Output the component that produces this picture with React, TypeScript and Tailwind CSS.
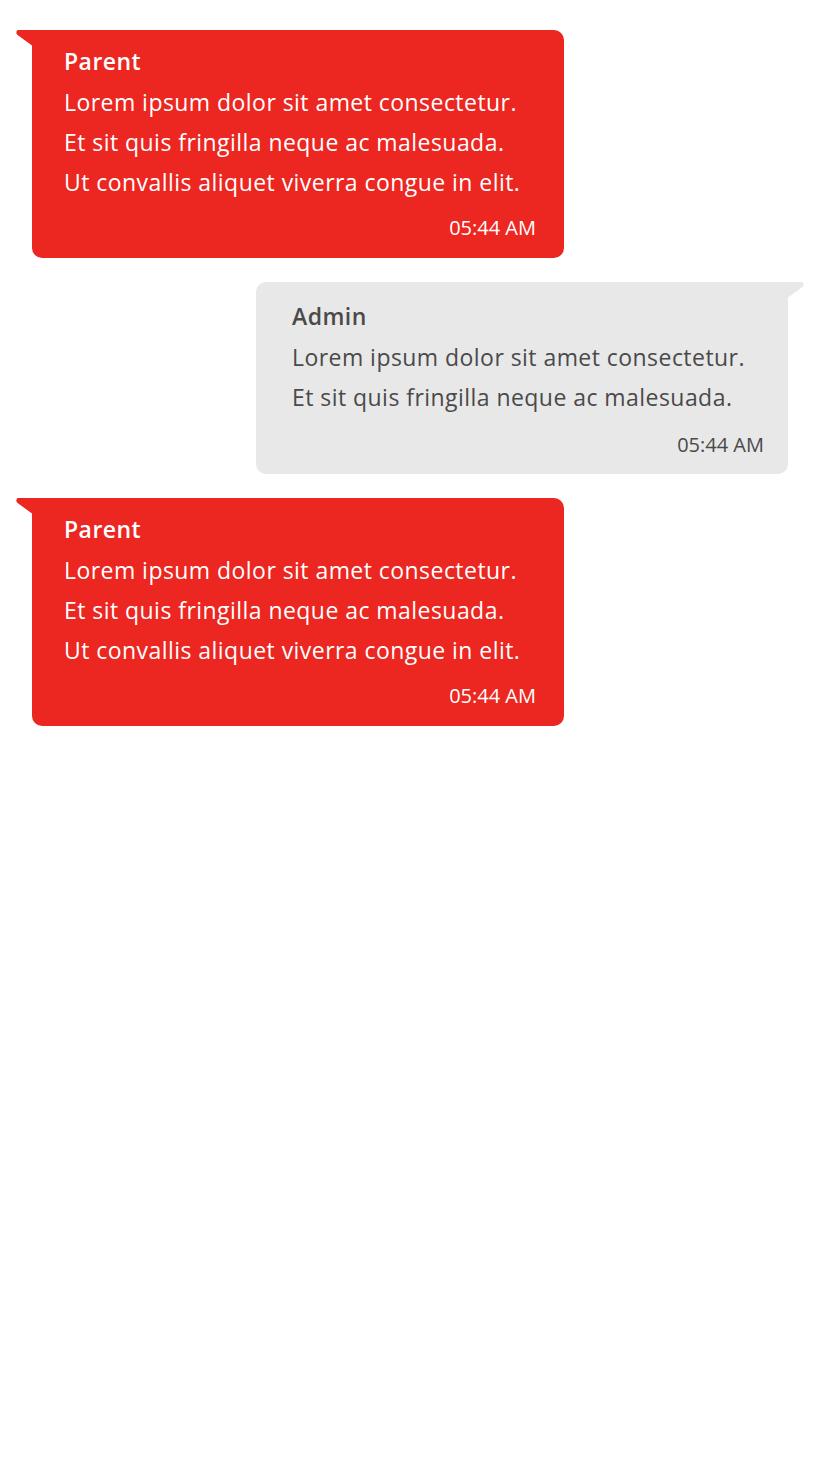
import React from 'react';

type Message = {
  id: number;
  author: string;
  lines: string[];
  time: string;
  mine: boolean;
};

const MESSAGES: Message[] = [
  {
    id: 1,
    author: 'Parent',
    lines: [
      'Lorem ipsum dolor sit amet consectetur.',
      'Et sit quis fringilla neque ac malesuada.',
      'Ut convallis aliquet viverra congue in elit.',
    ],
    time: '05:44 AM',
    mine: false,
  },
  {
    id: 2,
    author: 'Admin',
    lines: [
      'Lorem ipsum dolor sit amet consectetur.',
      'Et sit quis fringilla neque ac malesuada.',
    ],
    time: '05:44 AM',
    mine: true,
  },
  {
    id: 3,
    author: 'Parent',
    lines: [
      'Lorem ipsum dolor sit amet consectetur.',
      'Et sit quis fringilla neque ac malesuada.',
      'Ut convallis aliquet viverra congue in elit.',
    ],
    time: '05:44 AM',
    mine: false,
  },
];

function Tail({ right }: { right?: boolean }) {
  // small speech-bubble notch at the top corner
  return (
    <svg
      width="16"
      height="16"
      viewBox="0 0 16 16"
      className={right ? 'absolute top-0 -right-4 fill-[#e8e8e8] -scale-x-100' : 'absolute top-0 -left-4 fill-[#ec2620]'}
    >
      <path d="M2 0 H16 V15.5 L1.6 5 Q0 4 0.4 2 Q0.8 0 2 0 Z" />
    </svg>
  );
}

function Bubble({ msg }: { msg: Message }) {
  return (
    <div className={msg.mine ? 'flex justify-end pr-8' : 'flex justify-start pl-8'}>
      <div
        className={
          msg.mine
            ? 'relative w-[532px] rounded-[10px] rounded-tr-none bg-[#e8e8e8] text-[#4a4a4a] pl-9 pr-6 pt-[14px] pb-[15px]'
            : 'relative w-[532px] rounded-[10px] rounded-tl-none bg-[#ec2620] text-white pl-8 pr-7 pt-[11px] pb-[16px]'
        }
      >
        <Tail right={msg.mine} />
        <p className="text-[23px] leading-[41px] font-semibold tracking-[0.45px]">{msg.author}</p>
        {msg.lines.map((line, i) => (
          <p key={i} className="text-[23px] leading-[40px] tracking-[0.45px]">
            {line}
          </p>
        ))}
        <p className={msg.mine ? 'mt-[14px] text-right text-[20px] leading-[28px]' : 'mt-[12px] text-right text-[20px] leading-[28px]'}>
          {msg.time}
        </p>
      </div>
    </div>
  );
}

export default function App() {
  return (
    <div className="min-h-[1478px] bg-white pt-[30px] flex flex-col gap-6 font-['Open_Sans',sans-serif]">
      {MESSAGES.map((m) => (
        <Bubble key={m.id} msg={m} />
      ))}
    </div>
  );
}
